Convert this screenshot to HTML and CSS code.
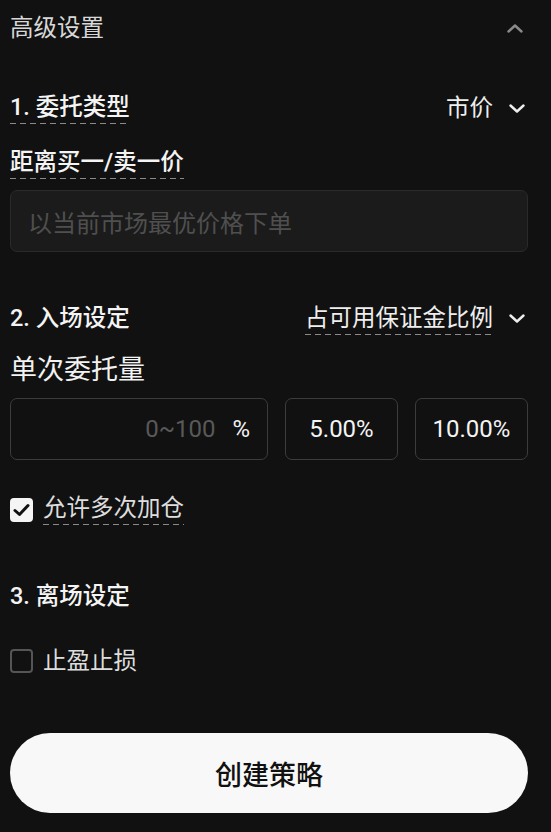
FILE: index.html
```html
<!DOCTYPE html>
<html lang="zh-CN">
<head>
    <meta charset="UTF-8">
    <meta name="viewport" content="width=device-width, initial-scale=1.0">
    <title>高级设置</title>
    <link rel="stylesheet" href="styles.css">
</head>
<body>
    <div class="panel">
        <div class="head">
            <span>高级设置</span>
            <svg class="chev up" width="16" height="9" viewBox="0 0 16 9"><polyline points="1.5,7.5 8,1.5 14.5,7.5"/></svg>
        </div>

        <!-- 1. order type -->
        <div class="row first">
            <span class="title dash">1. 委托类型</span>
            <div class="select">
                <span>市价</span>
                <svg class="chev" width="16" height="9" viewBox="0 0 16 9"><polyline points="1.5,1.5 8,7.5 14.5,1.5"/></svg>
            </div>
        </div>
        <div class="label-line">
            <span class="title dash">距离买一/卖一价</span>
        </div>
        <div class="input-box">以当前市场最优价格下单</div>

        <!-- 2. entry -->
        <div class="row second">
            <span class="title">2. 入场设定</span>
            <div class="select">
                <span class="dash">占可用保证金比例</span>
                <svg class="chev" width="16" height="9" viewBox="0 0 16 9"><polyline points="1.5,1.5 8,7.5 14.5,1.5"/></svg>
            </div>
        </div>
        <div class="amount-title">单次委托量</div>
        <div class="amount-row">
            <div class="amount-input">
                <span class="hint">0~100</span>
                <span>%</span>
            </div>
            <div class="preset">5.00%</div>
            <div class="preset">10.00%</div>
        </div>

        <label class="check-row multi">
            <span class="box checked">
                <svg width="17" height="14" viewBox="0 0 17 14"><polyline points="2,7.5 6.5,11.5 15,2.5"/></svg>
            </span>
            <span class="dash">允许多次加仓</span>
        </label>

        <!-- 3. exit -->
        <div class="row third">
            <span class="title">3. 离场设定</span>
        </div>
        <label class="check-row tpsl">
            <span class="box"></span>
            <span>止盈止损</span>
        </label>

        <button class="create">创建策略</button>
    </div>
</body>
</html>
```

FILE: styles.css
```css
* {
    box-sizing: border-box;
}

body {
    margin: 0;
    background: #111111;
    color: #f2f2f2;
    font-family: Roboto, 'Noto Sans CJK SC', sans-serif;
}

.panel {
    padding: 0 23px 0 10px;
}

.head {
    height: 56px;
    display: flex;
    align-items: center;
    justify-content: space-between;
    font-size: 23.5px;
    line-height: 28px;
    color: #d8d8d8;
    padding-right: 5px;
}

.chev {
    fill: none;
    stroke: #eeeeee;
    stroke-width: 2.4;
    stroke-linecap: round;
    stroke-linejoin: round;
}

.chev.up {
    stroke: #8a8a8a;
}

.row {
    height: 40px;
    display: flex;
    align-items: center;
    justify-content: space-between;
    font-size: 23.5px;
    line-height: 28px;
}

.row.first { margin-top: 32px; }
.row.second { margin-top: 46px; }
.row.third { margin-top: 51px; }

.title {
    font-weight: 500;
    color: #f4f4f4;
}

.dash {
    padding-bottom: 3px;
    background: linear-gradient(to right, #8a8a8a 60%, transparent 0) left bottom / 10px 1px repeat-x;
}

.select {
    display: flex;
    align-items: center;
    gap: 16px;
    padding-right: 3px;
    color: #eeeeee;
}

.row.second .select span {
    margin-top: 3px;
}

.label-line {
    display: flex;
    margin-top: 20px;
    font-size: 23.5px;
    line-height: 28px;
}

.input-box {
    margin-top: 11px;
    height: 62px;
    display: flex;
    align-items: center;
    padding-left: 17px;
    background: #1b1b1b;
    border: 1px solid #2a2a2a;
    border-radius: 7px;
    font-size: 24px;
    color: #4f4f4f;
}

.amount-title {
    margin-top: 16px;
    font-size: 27px;
    line-height: 32px;
    color: #f2f2f2;
}

.amount-row {
    margin-top: 12px;
    display: grid;
    grid-template-columns: 1fr 113px 113px;
    gap: 17px;
}

.amount-row > div {
    height: 62px;
    border: 1.5px solid #3c3c3c;
    border-radius: 7px;
    display: flex;
    align-items: center;
    font-size: 24px;
}

.amount-input {
    justify-content: flex-end;
    gap: 17px;
    padding-right: 17px;
    color: #f2f2f2;
}

.amount-input .hint {
    color: #595959;
}

.preset {
    justify-content: center;
    color: #f4f4f4;
}

.check-row {
    display: flex;
    align-items: center;
    gap: 10px;
    font-size: 23.5px;
    line-height: 28px;
    color: #dddddd;
}

.check-row.multi {
    margin-top: 34px;
    height: 31px;
}

.check-row.tpsl {
    margin-top: 31px;
    height: 28px;
}

.box {
    width: 23px;
    height: 24px;
    border: 2px solid #555555;
    border-radius: 4px;
    display: flex;
    align-items: center;
    justify-content: center;
}

.box.checked {
    background: #f5f5f5;
    border-color: #f5f5f5;
}

.box svg {
    fill: none;
    stroke: #111111;
    stroke-width: 3;
    stroke-linecap: round;
    stroke-linejoin: round;
}

.create {
    display: block;
    width: 100%;
    height: 80px;
    margin-top: 58px;
    border: none;
    border-radius: 40px;
    background: #f8f8f8;
    color: #111111;
    font-family: 'Noto Sans CJK SC', sans-serif;
    font-size: 27px;
    font-weight: 500;
}
```
